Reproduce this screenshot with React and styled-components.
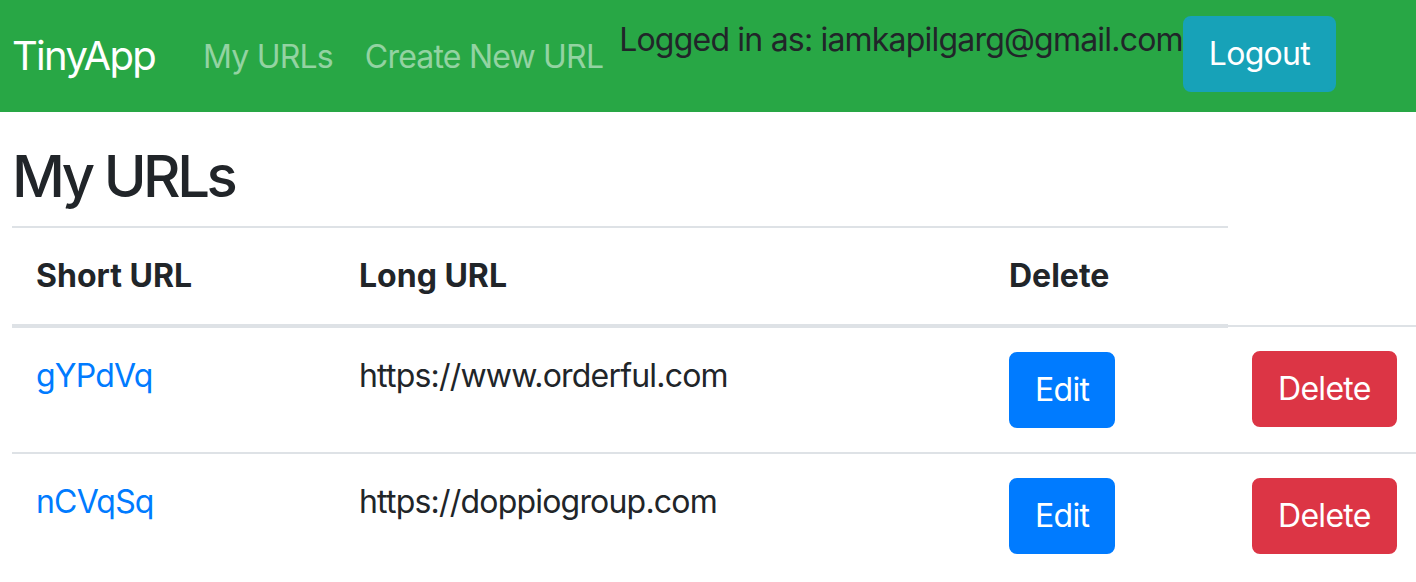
import React from "react"
import styled, { createGlobalStyle } from "styled-components"

const GlobalStyle = createGlobalStyle`
  html, body {
    margin: 0;
    padding: 0;
    background: #fff;
    overflow: hidden;
  }
  body {
    font-family: Inter, "Noto Sans", "Liberation Sans", sans-serif;
    font-size: 32px;
    line-height: 48px;
    letter-spacing: -0.8px;
    color: #212529;
  }
`

const Navbar = styled.nav`
  display: flex;
  align-items: flex-start;
  height: 112px;
  box-sizing: border-box;
  padding: 16px 12px;
  background: #28a745;
`

const Brand = styled.a`
  font-size: 40px;
  line-height: 60px;
  letter-spacing: -1.7px;
  padding: 10px 0;
  margin-right: 32px;
  color: #fff;
  text-decoration: none;
`

const NavList = styled.ul`
  display: flex;
  margin: 0;
  padding: 0;
  list-style: none;
`

const NavLink = styled.a`
  display: block;
  padding: 17px 16px 15px;
  color: rgba(255, 255, 255, 0.5);
  text-decoration: none;
`

const UserInfo = styled.span`
  color: #212529;
`

const Button = styled.button`
  font-family: inherit;
  font-size: 32px;
  line-height: 48px;
  letter-spacing: -0.7px;
  padding: 12px 24px;
  border: 2px solid ${(p) => p.$color};
  border-radius: 8px;
  background: ${(p) => p.$color};
  color: #fff;
  cursor: pointer;
`

const Main = styled.main`
  padding: 0 0 0 12px;
`

const Heading = styled.h1`
  margin: 29px 0 15px;
  font-size: 58px;
  line-height: 70px;
  letter-spacing: -3.5px;
  font-weight: 500;
`

const Table = styled.table`
  width: 1404px;
  table-layout: fixed;
  border-collapse: collapse;

  th,
  td {
    padding: 24px;
    text-align: left;
    vertical-align: top;
    border-top: 2px solid #dee2e6;
  }
  th {
    font-weight: 700;
    letter-spacing: 0;
    border-bottom: 4px solid #dee2e6;
  }
`

const ShortLink = styled.a`
  color: #007bff;
  text-decoration: none;
`

const urls = [
  { id: "gYPdVq", long: "https://www.orderful.com" },
  { id: "nCVqSq", long: "https://doppiogroup.com" },
]

const App = () => (
  <>
    <GlobalStyle />
    <Navbar>
      <Brand href="#">TinyApp</Brand>
      <NavList>
        <li>
          <NavLink href="#">My URLs</NavLink>
        </li>
        <li>
          <NavLink href="#">Create New URL</NavLink>
        </li>
      </NavList>
      <UserInfo>Logged in as: iamkapilgarg@gmail.com</UserInfo>
      <Button $color="#17a2b8">Logout</Button>
    </Navbar>
    <Main>
      <Heading>My URLs</Heading>
      <Table>
        <colgroup>
          <col style={{ width: 323 }} />
          <col style={{ width: 650 }} />
          <col style={{ width: 243 }} />
          <col style={{ width: 188 }} />
        </colgroup>
        <thead>
          <tr>
            <th>Short URL</th>
            <th>Long URL</th>
            <th>Delete</th>
          </tr>
        </thead>
        <tbody>
          {urls.map((url) => (
            <tr key={url.id}>
              <td>
                <ShortLink href="#">{url.id}</ShortLink>
              </td>
              <td>{url.long}</td>
              <td>
                <Button $color="#007bff">Edit</Button>
              </td>
              <td>
                <Button $color="#dc3545">Delete</Button>
              </td>
            </tr>
          ))}
        </tbody>
      </Table>
    </Main>
  </>
)

export default App
